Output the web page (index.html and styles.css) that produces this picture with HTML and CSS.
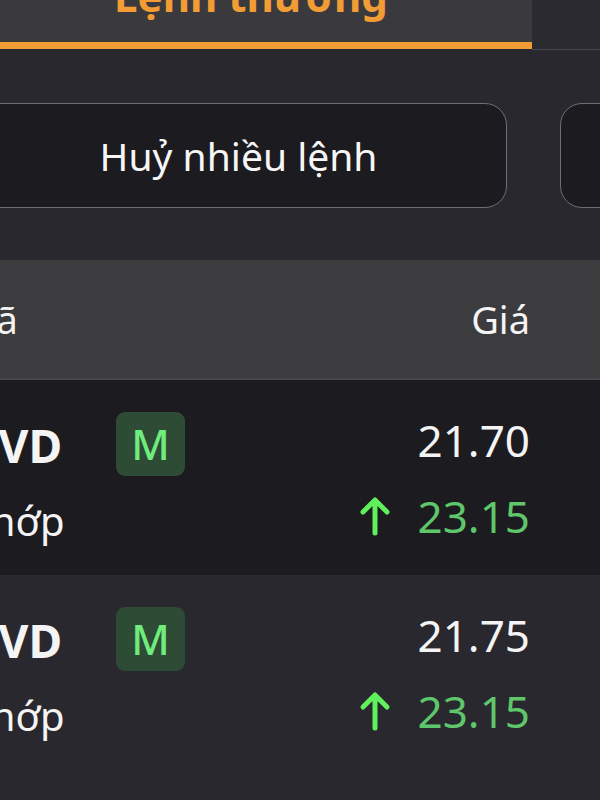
FILE: index.html
```html
<!DOCTYPE html>
<html lang="vi">
<head>
  <meta charset="UTF-8">
  <title>Sổ lệnh</title>
  <meta name="viewport" content="width=device-width, initial-scale=1.0">
  <link rel="stylesheet" href="styles.css">
</head>
<body>
  <div class="screen">
    <!-- Thanh tab loại lệnh -->
    <div class="tabs">
      <div class="tab active"><span class="tab-label">Lệnh thường</span></div>
      <div class="tab"></div>
    </div>

    <!-- Các nút thao tác -->
    <div class="actions">
      <button class="action-btn main">Huỷ nhiều lệnh</button>
      <button class="action-btn"></button>
    </div>

    <!-- Tiêu đề bảng -->
    <div class="table-head">
      <span class="col-code">Mã</span>
      <span class="col-price">Giá</span>
    </div>

    <!-- Danh sách lệnh -->
    <div class="order-list">
      <div class="order odd">
        <div class="name">
          <div class="ticker">PVD</div>
          <div class="status">Khớp</div>
        </div>
        <div class="badge">M</div>
        <div class="prices">
          <div class="price">21.70</div>
          <div class="match">
            <svg class="arrow" viewBox="0 0 32 40" width="32" height="40">
              <path d="M16 4 V37 M4 16 L16 4 L28 16" fill="none" stroke="#5ff05b" stroke-width="5" stroke-linecap="round" stroke-linejoin="round"/>
            </svg>
            <span>23.15</span>
          </div>
        </div>
      </div>
      <div class="order">
        <div class="name">
          <div class="ticker">PVD</div>
          <div class="status">Khớp</div>
        </div>
        <div class="badge">M</div>
        <div class="prices">
          <div class="price">21.75</div>
          <div class="match">
            <svg class="arrow" viewBox="0 0 32 40" width="32" height="40">
              <path d="M16 4 V37 M4 16 L16 4 L28 16" fill="none" stroke="#5ff05b" stroke-width="5" stroke-linecap="round" stroke-linejoin="round"/>
            </svg>
            <span>23.15</span>
          </div>
        </div>
      </div>
    </div>
  </div>
</body>
</html>
```

FILE: styles.css
```css
/* Reset */
* {
  box-sizing: border-box;
  margin: 0;
  padding: 0;
}

body {
  font-family: "Noto Sans", "Liberation Sans", sans-serif;
  background: #29282e;
  color: #f4f4f4;
  width: 600px;
  height: 800px;
  overflow: hidden;
}

/* Màn hình bị cắt bên trái */
.screen {
  margin-left: -30px;
  width: 630px;
}

/* Tabs */
.tabs {
  display: flex;
  align-items: flex-start;
  height: 50px;
}

.tab {
  flex: 1;
  height: 50px;
  background: #2b2a30;
  border-bottom: 1px solid #48474c;
}

.tab.active {
  flex: 0 0 562px;
  height: 49px;
  background: #3a3a3e;
  border-bottom: 7px solid #f29c35;
  text-align: center;
  overflow: visible;
}

.tab-label {
  display: block;
  margin-top: -25px;
  font-size: 42px;
  line-height: 42px;
  font-weight: bold;
  color: #f29c35;
}

/* Nút thao tác */
.actions {
  display: flex;
  gap: 53px;
  padding: 53px 0 52px;
}

.action-btn {
  height: 105px;
  flex: 0 0 537px;
  background: #1c1b20;
  border: 1.5px solid #6f6e73;
  border-radius: 22px;
  color: #f6f6f6;
  font-family: inherit;
  font-size: 39px;
}

.action-btn + .action-btn {
  flex: 0 0 200px;
}

/* Tiêu đề bảng */
.table-head {
  display: flex;
  align-items: center;
  justify-content: space-between;
  height: 120px;
  padding: 0 70px 0 0;
  background: #3c3c3f;
  border-bottom: 2px solid #47474a;
  font-size: 38px;
}

.col-code {
  margin-left: -8px;
}

/* Dòng lệnh */
.order {
  display: flex;
  height: 195px;
  padding-right: 70px;
  background: #29282e;
}

.order.odd {
  background: #1c1b1f;
}

.name {
  flex: 0 0 146px;
  padding-top: 27px;
}

.ticker {
  font-size: 46px;
  line-height: 76px;
  font-weight: bold;
}

.status {
  margin-left: -4px;
  font-size: 40px;
  line-height: 76px;
}

.badge {
  margin-top: 32px;
  width: 69px;
  height: 64px;
  border-radius: 9px;
  background: #2d4b35;
  color: #70ec7c;
  font-size: 42px;
  font-weight: 500;
  line-height: 64px;
  text-align: center;
}

.prices {
  margin-left: auto;
  padding-top: 22px;
  text-align: right;
  font-size: 44px;
  line-height: 76px;
}

.match {
  display: flex;
  align-items: center;
  justify-content: flex-end;
  gap: 27px;
  color: #5ec66b;
}

.arrow {
  display: block;
}
```
